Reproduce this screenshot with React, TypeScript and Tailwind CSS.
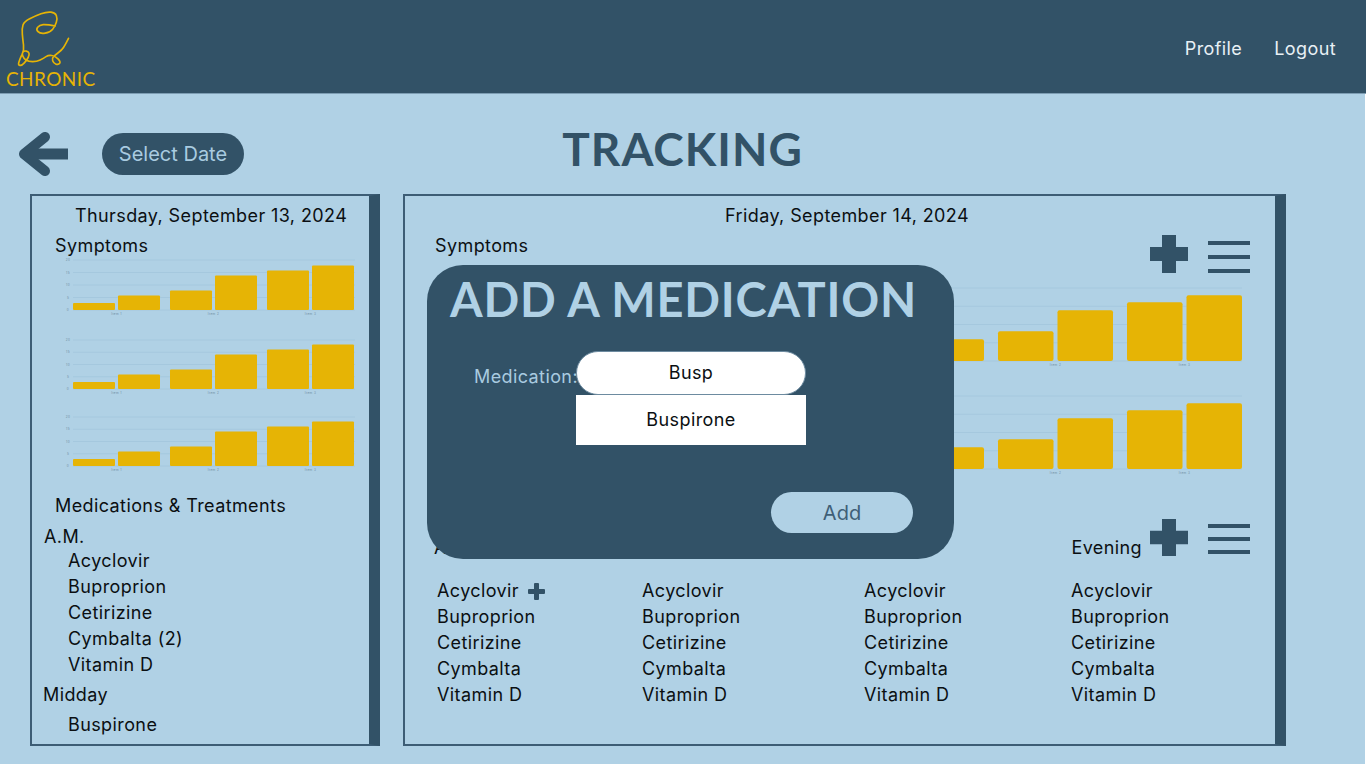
import React from 'react';

const medications = ['Acyclovir', 'Buproprion', 'Cetirizine', 'Cymbalta', 'Vitamin D'];
const previousAm = ['Acyclovir', 'Buproprion', 'Cetirizine', 'Cymbalta (2)', 'Vitamin D'];

// logo stroke, traced from the wordmark, in 3x pixels
const logoLoop = [
  [165, 78], [140, 73], [118, 75], [107, 88], [120, 102], [150, 97], [165, 78],
  [172, 55], [165, 38], [140, 35], [105, 48], [72, 65], [65, 85], [68, 120], [72, 150],
  [60, 175], [53, 195], [65, 197], [80, 180], [88, 165], [85, 155], [72, 152], [65, 160], [70, 175],
  [85, 185], [110, 185], [130, 175], [145, 165], [165, 168], [182, 185], [175, 195], [160, 190],
  [155, 175], [165, 165], [185, 150], [195, 135], [205, 115],
];

const smoothPath = (pts: number[][]) => {
  let d = `M${pts[0][0]} ${pts[0][1]}`;
  for (let i = 1; i < pts.length - 1; i++) {
    const mx = (pts[i][0] + pts[i + 1][0]) / 2;
    const my = (pts[i][1] + pts[i + 1][1]) / 2;
    d += `Q${pts[i][0]} ${pts[i][1]} ${mx} ${my}`;
  }
  const last = pts[pts.length - 1];
  return `${d}L${last[0]} ${last[1]}`;
};

interface ChartProps {
  width: number;
  height: number;
  bars: number[];
  barWidth: number;
  barGap: number;
  groupGap: number;
  left: number;
  compact?: boolean;
  className?: string;
}

function BarChart({ width, height, bars, barWidth, barGap, groupGap, left, compact, className }: ChartProps) {
  const top = 2;
  const base = top + height;
  const gridLines = [0, 0.25, 0.5, 0.75, 1];
  const axis = ['20', '15', '10', '5', '0'];

  return (
    <svg width={width} height={height + 8} className={`block ${className ?? ''}`}>
      {gridLines.map((g, i) => (
        <g key={g}>
          <line x1={left} x2={width} y1={top + g * height} y2={top + g * height} stroke="#a5c8de" strokeWidth="1" />
          {compact && (
            <text x={left - 5} y={top + g * height + 1} fontSize="3" fill="#6d8ba0" textAnchor="middle">
              {axis[i]}
            </text>
          )}
        </g>
      ))}
      {bars.map((h, i) => {
        const group = Math.floor(i / 2);
        const x = left + group * (barWidth * 2 + barGap + groupGap) + (i % 2) * (barWidth + barGap);
        return <rect key={i} x={x} y={base - h} width={barWidth} height={h} rx={compact ? 1 : 2} fill="#e6b405" />;
      })}
      {[0, 1, 2].map((group) => (
        <text
          key={group}
          x={left + group * (barWidth * 2 + barGap + groupGap) + barWidth + barGap / 2}
          y={base + 5}
          fontSize="3"
          fill="#6d8ba0"
          textAnchor="middle"
        >
          Item {group + 1}
        </text>
      ))}
    </svg>
  );
}

function PlusIcon({ className }: { className?: string }) {
  return (
    <svg viewBox="0 0 38 38" preserveAspectRatio="none" className={className} fill="#325267">
      <path d="M12 0h14v12h12v14H26v12H12V26H0V12h12z" />
    </svg>
  );
}

function MenuIcon({ className }: { className: string }) {
  return (
    <div className={`flex w-[42px] flex-col justify-between ${className}`}>
      <div className="h-1 bg-[#325267]" />
      <div className="h-1 bg-[#325267]" />
      <div className="h-1 bg-[#325267]" />
    </div>
  );
}

function MedColumn({ className, items = medications, plus }: { className: string; items?: string[]; plus?: boolean }) {
  return (
    <div className={className}>
      {items.map((name, i) => (
        <div key={name} className="flex h-[26px] items-center">
          {name}
          {plus && i === 0 && (
            <svg viewBox="0 0 17 17" className="ml-[9px] h-[17px] w-[17px]" fill="#325267">
              <path d="M6 1q0-1 1-1h3q1 0 1 1v5h5q1 0 1 1v3q0 1-1 1h-5v5q0 1-1 1H7q-1 0-1-1v-5H1q-1 0-1-1V7q0-1 1-1h5z" />
            </svg>
          )}
        </div>
      ))}
    </div>
  );
}

export default function App() {
  const smallBars = [7, 14.5, 19.5, 34.5, 39.5, 44.5];
  const largeBars = [10, 21.7, 29.7, 50.7, 58.7, 65.7];

  return (
    <div className="relative h-[768px] w-full overflow-hidden bg-white font-['Inter',sans-serif] text-[18px] leading-[26px] tracking-[0.4px] text-[#0b0f12]">
      <div className="h-[764px] w-[1365px] bg-[#b0d1e5]">
        {/* Header */}
        <header className="flex h-[94px] w-[1366px] items-start justify-between border-b border-[#7d9db3] bg-[#325267] text-[#e8f0f5]">
          <div className="ml-[6px] mt-[9px] flex flex-col">
            <svg viewBox="18 27 200 174" className="h-[58px] w-[67px]" fill="none" stroke="#e6b405" strokeWidth="5" strokeLinecap="round" strokeLinejoin="round">
              <path d={smoothPath(logoLoop)} />
            </svg>
            <span className="mt-px font-['Lato',sans-serif] text-[19px] leading-[22px] tracking-[0.4px] text-[#e6b405]">CHRONIC</span>
          </div>
          <nav className="mr-[30px] mt-[36px] flex gap-[32px]">
            <span>Profile</span>
            <span>Logout</span>
          </nav>
        </header>

        {/* Title row */}
        <div className="mt-[35px] grid h-[50px] grid-cols-[1fr_auto_1fr] items-center">
          <div className="flex items-center">
            <svg viewBox="0 0 50 44" className="ml-[19px] h-[44px] w-[50px]">
              <path d="M26 5L5 22l21 17" fill="none" stroke="#325267" strokeWidth="10" strokeLinecap="round" strokeLinejoin="round" />
              <path d="M8 16.5h41v11H8z" fill="#325267" />
            </svg>
            <button className="ml-[33px] flex h-[42px] w-[142px] items-center justify-center rounded-full bg-[#325267] text-[20px] tracking-normal text-[#a9cbe0]">
              Select Date
            </button>
          </div>
          <h1 className="-translate-y-[5px] font-['Lato',sans-serif] text-[46px] font-bold leading-[50px] tracking-[1px] text-[#325267]">TRACKING</h1>
          <div />
        </div>

        <div className="ml-[30px] mt-[15px] flex h-[552px] gap-[23px]">
          {/* Previous day */}
          <section className="w-[350px] border-2 border-r-[11px] border-[#3d5d75] border-r-[#325267] pt-[7px]">
            <div className="ml-[43px] whitespace-nowrap">Thursday, September 13, 2024</div>
            <div className="ml-[23px] mt-[4px]">Symptoms</div>
            <div className="ml-[23px] -mt-[1px] flex flex-col">
              <BarChart width={300} height={50} left={18} barWidth={42} barGap={3} groupGap={10} compact bars={smallBars} />
              <BarChart width={300} height={49} left={18} barWidth={42} barGap={3} groupGap={10} compact bars={smallBars} className="mt-[22px]" />
              <BarChart width={300} height={49} left={18} barWidth={42} barGap={3} groupGap={10} compact bars={smallBars} className="mt-[20px]" />
            </div>
            <div className="ml-[23px] mt-[21px] whitespace-nowrap">Medications &amp; Treatments</div>
            <div className="ml-[12px] mt-[5px]">A.M.</div>
            <MedColumn className="ml-[36px] -mt-[2px]" items={previousAm} />
            <div className="ml-[11px] mt-[4px]">Midday</div>
            <div className="ml-[36px] mt-[4px]">Buspirone</div>
          </section>

          {/* Selected day */}
          <section className="w-[883px] border-2 border-r-[11px] border-[#3d5d75] border-r-[#325267] pt-[7px]">
            <div className="pl-[14px] text-center">Friday, September 14, 2024</div>
            <div className="mt-[4px] flex h-[26px] items-start justify-between pl-[30px] pr-[25px]">
              <span>Symptoms</span>
              <div className="mt-[2px] flex gap-[20px]">
                <PlusIcon className="h-[38px] w-[38px]" />
                <MenuIcon className="mt-[6px] h-[32px]" />
              </div>
            </div>
            <div className="ml-[445px] mt-[27px] flex flex-col gap-[27px]">
              <BarChart width={392} height={73} left={19} barWidth={55.5} barGap={4} groupGap={14} bars={largeBars} />
              <BarChart width={392} height={73} left={19} barWidth={55.5} barGap={4} groupGap={14} bars={largeBars} />
            </div>
            <div className="mt-[44px] flex h-[37px] items-end justify-between pl-[30px] pr-[25px]">
              <span className="-mb-[5px] -ml-px">A.M.</span>
              <div className="flex h-[37px] items-start gap-[20px]">
                <span className="-mr-[12px] mt-[16px]">Evening</span>
                <PlusIcon className="h-[37px] w-[38px]" />
                <MenuIcon className="mt-[5px] h-[30px]" />
              </div>
            </div>
            <div className="mt-[22px] flex">
              <MedColumn className="ml-[32px] w-[205px]" plus />
              <MedColumn className="w-[222px]" />
              <MedColumn className="w-[207px]" />
              <MedColumn className="w-[150px]" />
            </div>
          </section>
        </div>
      </div>

      {/* Add medication dialog */}
      <div className="absolute left-[427px] top-[265px] flex h-[294px] w-[527px] flex-col rounded-[36px] bg-[#325267]">
        <h2 className="ml-[23px] mt-[9px] whitespace-nowrap font-['Lato',sans-serif] text-[47px] font-bold leading-[50px] tracking-[0.8px] text-[#b0d1e5]">
          ADD A MEDICATION
        </h2>
        <div className="ml-[47px] mt-[27px] flex">
          <span className="w-[102px] whitespace-nowrap pt-[13px] text-[#a9cbe0]">Medication:</span>
          <div className="z-10 w-[230px]">
            <div className="flex h-[44px] items-center justify-center rounded-full border border-[#6d8ba0] bg-white">Busp</div>
            <div className="flex h-[50px] items-center justify-center bg-white">Buspirone</div>
          </div>
        </div>
        <button className="ml-[344px] mt-[47px] flex h-[41px] w-[142px] items-center justify-center rounded-full bg-[#b0d1e5] text-[20px] tracking-normal text-[#3f5f77]">
          Add
        </button>
      </div>
    </div>
  );
}
